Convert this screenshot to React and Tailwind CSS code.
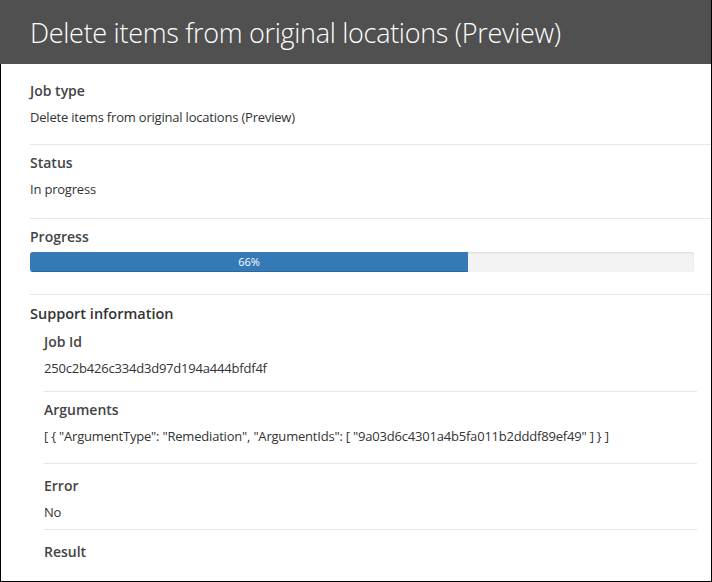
const Field = ({ label, value, className = '' }) => (
  <div className={`border-b border-[#e6e6e6] ${className}`}>
    <div className="text-[14px] leading-5 font-semibold text-[#444]">{label}</div>
    {value && (
      <div className="mt-1.5 text-[13px] leading-5 tracking-[-0.2px] text-[#333]">{value}</div>
    )}
  </div>
);

export default function App() {
  return (
    <div
      className="w-[712px] h-[582px] bg-white border-r border-b border-black overflow-hidden flex flex-col"
      style={{ fontFamily: "'Open Sans', 'Noto Sans', sans-serif" }}
    >
      <header className="h-16 shrink-0 bg-[#505050] flex items-center pl-[30px]">
        <h1 className="text-white text-[27px] font-light leading-none tracking-[-0.3px]">
          Delete items from original locations (Preview)
        </h1>
      </header>

      <div className="flex-1 border-l border-black pl-[29px]">
        <Field
          label="Job type"
          value="Delete items from original locations (Preview)"
          className="pt-[17px] pb-[17px]"
        />
        <Field label="Status" value="In progress" className="pt-2 pb-[19px]" />

        <div className="border-b border-[#e6e6e6] pt-2 pb-[22px]">
          <div className="text-[14px] leading-5 font-semibold text-[#444]">Progress</div>
          <div className="mt-[5px] mr-[17px] h-5 rounded-[3px] bg-[#f3f3f3] shadow-[inset_0_1px_2px_rgba(0,0,0,0.1)] overflow-hidden">
            <div
              className="h-full bg-[#337ab7] text-white text-[11px] leading-5 text-center shadow-[inset_0_-1px_0_rgba(0,0,0,0.15)]"
              style={{ width: '66%' }}
            >
              66%
            </div>
          </div>
        </div>

        <div className="pt-2">
          <div className="text-[14.5px] leading-[22px] font-semibold text-[#333]">Support information</div>
          <div className="pl-[14px] pr-[14px] mt-[7px]">
            <Field label="Job Id" value="250c2b426c334d3d97d194a444bfdf4f" className="pb-[13px]" />
            <Field
              label="Arguments"
              value={'[ { "ArgumentType": "Remediation", "ArgumentIds": [ "9a03d6c4301a4b5fa011b2dddf89ef49" ] } ]'}
              className="pt-2 pb-[17px]"
            />
            <Field label="Error" value="No" className="pt-3 pb-[7px]" />
            <div className="pt-3 text-[14px] leading-5 font-semibold text-[#444]">Result</div>
          </div>
        </div>
      </div>
    </div>
  );
}
